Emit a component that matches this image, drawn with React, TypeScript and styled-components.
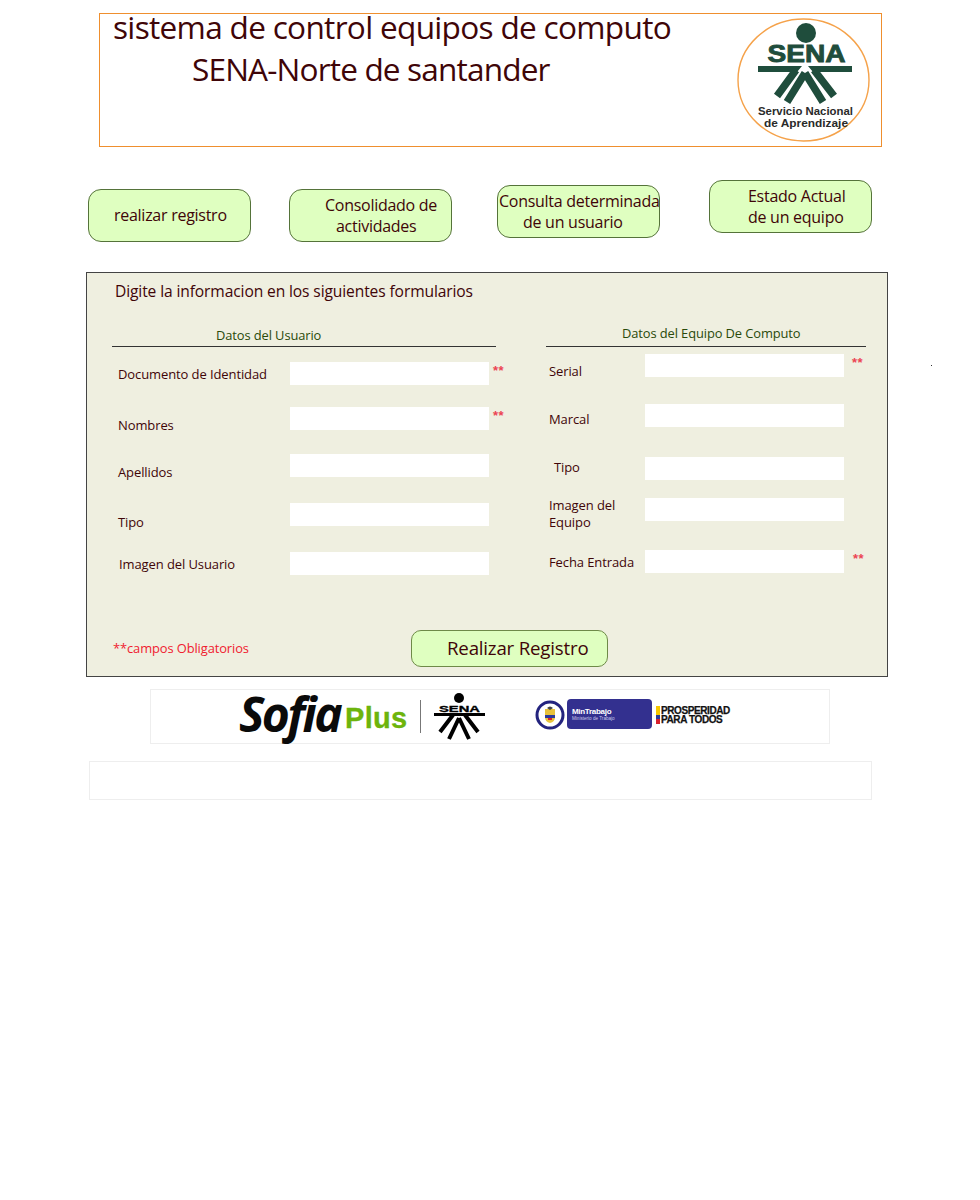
import React from "react";
import styled, { createGlobalStyle } from "styled-components";

const Global = createGlobalStyle`
  * { box-sizing: border-box; }
  body { margin: 0; background: #fff; font-family: "Open Sans", "Noto Sans", sans-serif; color: #3f0508; }
`;
const Page = styled.div`
  position: relative;
  width: 980px;
  height: 1200px;
  padding-top: 13px;
`;
const Header = styled.header`
  display: flex;
  justify-content: space-between;
  width: 783px;
  height: 134px;
  margin-left: 99px;
  border: 1px solid #ef8f2e;
`;
const Titles = styled.div`
  display: flex;
  flex-direction: column;
  gap: 14px;
  margin-top: -1px;
`;
const Title = styled.h1<{ $indent: number; $spacing: number }>`
  margin: 0 0 0 ${(p) => p.$indent}px;
  font-size: 31.6px;
  font-weight: 400;
  line-height: 28px;
  letter-spacing: ${(p) => p.$spacing}px;
  white-space: nowrap;
  color: #3f0508;
`;
const LogoSvg = styled.svg`
  flex: none;
  width: 140px;
  height: 130px;
  margin: 1px 7px 0 0;
`;
const Nav = styled.nav`
  display: flex;
  height: 62px;
  margin: 33px 0 0 88px;
`;
const NavButton = styled.a<{ $left: number; $top: number }>`
  display: flex;
  flex-direction: column;
  justify-content: center;
  width: 163px;
  height: 53px;
  margin: ${(p) => p.$top}px 0 0 ${(p) => p.$left}px;
  background: #dfffc0;
  border: 1px solid #55733a;
  border-radius: 13px;
  font-size: 16px;
  line-height: 21px;
  letter-spacing: -0.27px;
`;
const NavLine = styled.span<{ $indent: number }>`
  display: block;
  margin-left: ${(p) => p.$indent}px;
  white-space: nowrap;
`;
const Panel = styled.form`
  display: flex;
  flex-direction: column;
  width: 802px;
  height: 405px;
  margin: 30px 0 0 86px;
  padding: 8px 0 9px;
  background: #efefe0;
  border: 1px solid #444;
`;
const PanelTitle = styled.h2`
  margin: 0 0 0 28px;
  font-size: 15.6px;
  font-weight: 400;
  line-height: 20px;
  letter-spacing: -0.12px;
`;
const Columns = styled.div`
  display: flex;
  margin: 22px 0 0 25px;
`;
const Column = styled.section<{ $width: number; $gap: number }>`
  width: ${(p) => p.$width}px;
  margin-right: ${(p) => p.$gap}px;
`;
const ColumnHeading = styled.h3<{ $indent: number; $top: number }>`
  height: 24px;
  margin: 0;
  padding: ${(p) => p.$top}px 0 0 ${(p) => p.$indent}px;
  border-bottom: 1px solid #333;
  font-size: 12.9px;
  font-weight: 400;
  line-height: 20px;
  letter-spacing: -0.1px;
  color: #2a4a0a;
`;
const Field = styled.div<{ $top: number }>`
  display: flex;
  height: 23px;
  margin-top: ${(p) => p.$top}px;
`;
const FieldLabel = styled.label<{ $width: number; $indent: number; $offset: number }>`
  flex: none;
  width: ${(p) => p.$width}px;
  height: 18px;
  margin-top: ${(p) => p.$offset}px;
  padding-left: ${(p) => p.$indent}px;
  font-size: 13px;
  line-height: 17px;
  letter-spacing: -0.1px;
`;
const Input = styled.input`
  flex: none;
  width: 199px;
  height: 23px;
  padding: 0;
  background: #fff;
  border: 0;
`;
const Required = styled.span<{ $gap: number }>`
  margin: 1px 0 0 ${(p) => p.$gap}px;
  font-family: "Liberation Sans", sans-serif;
  font-size: 13px;
  font-weight: 700;
  line-height: 16px;
  letter-spacing: 0.5px;
  color: #ec4453;
`;
const PanelFooter = styled.div`
  display: flex;
  align-items: center;
  margin-top: auto;
`;
const FooterNote = styled.span`
  width: 324px;
  padding: 0 0 2px 26px;
  font-size: 12.9px;
  letter-spacing: -0.1px;
  color: #f0202f;
`;
const SubmitButton = styled.button`
  width: 197px;
  height: 37px;
  padding: 0 0 2px 35px;
  text-align: left;
  background: #dfffc0;
  border: 1px solid #6e8a48;
  border-radius: 10px;
  font-family: inherit;
  font-size: 18.7px;
  letter-spacing: -0.2px;
  color: #3f0508;
`;
const Banner = styled.div`
  display: flex;
  align-items: center;
  width: 680px;
  height: 55px;
  margin: 12px 0 0 150px;
  padding-left: 88px;
  border: 1px solid #eee;
`;
const Sofia = styled.span`
  width: 106px;
  margin-bottom: 6px;
  font-family: "Open Sans", sans-serif;
  font-size: 48px;
  font-weight: 700;
  font-style: italic;
  line-height: 50px;
  letter-spacing: -2.6px;
  color: #0a0a0a;
`;
const Plus = styled.span`
  width: 64px;
  margin-top: 3px;
  font-family: "Liberation Sans", sans-serif;
  font-size: 29px;
  font-weight: 700;
  line-height: 34px;
  letter-spacing: 0.3px;
  color: #6db40c;
  -webkit-text-stroke: 0.3px #6db40c;
`;
const Divider = styled.span`
  width: 1px;
  height: 33px;
  margin-left: 11px;
  background: #777;
`;
const SenaSmall = styled.svg`
  flex: none;
  width: 52px;
  height: 48px;
  margin-left: 13px;
`;
const Seal = styled.svg`
  flex: none;
  width: 30px;
  height: 30px;
  margin: 0 0 4px 49px;
`;
const Ministry = styled.div`
  display: flex;
  flex-direction: column;
  justify-content: center;
  width: 85px;
  height: 30px;
  margin: 0 0 5px 2px;
  padding-left: 5px;
  background: #33308f;
  border-radius: 4px;
  font-family: "Liberation Sans", sans-serif;
  color: #fff;
`;
const MinistryName = styled.span`
  font-size: 8px;
  font-weight: 700;
  line-height: 9px;
  letter-spacing: -0.3px;
`;
const MinistrySub = styled.span`
  font-size: 4.6px;
  line-height: 6px;
  color: #c9c8ea;
`;
const Flag = styled.span`
  flex: none;
  width: 4px;
  height: 18px;
  margin: 0 0 3px 4px;
  background: linear-gradient(#f7c600 0 50%, #2a3a9c 50% 75%, #d8202c 75%);
`;
const Prosperity = styled.span`
  margin: 0 0 3px 1px;
  font-family: "Liberation Sans", sans-serif;
  font-size: 10px;
  font-weight: 700;
  line-height: 9.5px;
  letter-spacing: -0.4px;
  white-space: nowrap;
  color: #111;
  -webkit-text-stroke: 0.25px #111;
`;
const EmptyBox = styled.div`
  width: 783px;
  height: 39px;
  margin: 17px 0 0 89px;
  border: 1px solid #eee;
`;
const Speck = styled.span`
  position: absolute;
  left: 931px;
  top: 365px;
  width: 1px;
  height: 1px;
  background: #333;
`;

const SenaLogo = () => (
  <LogoSvg viewBox="734 15 140 130">
    <ellipse cx="803.5" cy="80" rx="65.5" ry="61" fill="#fff" stroke="#f5a24a" strokeWidth="1.4" />
    <circle cx="806" cy="33" r="10" fill="#1f4d3c" />
    <text x="806.5" y="62" textAnchor="middle" fontFamily="Liberation Sans" fontWeight="700" fontSize="24.5" textLength="78" lengthAdjust="spacingAndGlyphs" fill="#1f4d3c" stroke="#1f4d3c" strokeWidth="0.9">SENA</text>
    <path d="M758 66h44l-5 6h-39zM852 66h-44l5 6h39z" fill="#1f4d3c" />
    <path d="M796 70 777 96M805 73 787 102M805 73 823 102M814 70 834 96" fill="none" stroke="#1f4d3c" strokeWidth="7.5" />
    <text x="805.5" y="114.5" textAnchor="middle" fontFamily="Liberation Sans" fontWeight="700" fontSize="10.5" textLength="95" lengthAdjust="spacingAndGlyphs" fill="#2a2a2a">Servicio Nacional</text>
    <text x="806" y="126.5" textAnchor="middle" fontFamily="Liberation Sans" fontWeight="700" fontSize="10.5" textLength="84" lengthAdjust="spacingAndGlyphs" fill="#2a2a2a">de Aprendizaje</text>
  </LogoSvg>
);

const App = () => (
  <Page>
    <Global />
    <Header>
      <Titles>
        <Title $indent={13} $spacing={-0.7}>sistema de control equipos de computo</Title>
        <Title $indent={92} $spacing={-0.85}>SENA-Norte de santander</Title>
      </Titles>
      <SenaLogo />
    </Header>
    <Nav>
      <NavButton $left={0} $top={9}>
        <NavLine $indent={25}>realizar registro</NavLine>
      </NavButton>
      <NavButton $left={38} $top={9}>
        <NavLine $indent={35}>Consolidado de</NavLine>
        <NavLine $indent={46}>actividades</NavLine>
      </NavButton>
      <NavButton $left={45} $top={5}>
        <NavLine $indent={1}>Consulta determinada</NavLine>
        <NavLine $indent={25}>de un usuario</NavLine>
      </NavButton>
      <NavButton $left={49} $top={0}>
        <NavLine $indent={38}>Estado Actual</NavLine>
        <NavLine $indent={38}>de un equipo</NavLine>
      </NavButton>
    </Nav>
    <Panel>
      <PanelTitle>Digite la informacion en los siguientes formularios</PanelTitle>
      <Columns>
        <Column $width={384} $gap={50}>
          <ColumnHeading $indent={104} $top={2}>Datos del Usuario</ColumnHeading>
          <Field $top={15}>
            <FieldLabel $width={178} $indent={6} $offset={4}>Documento de Identidad</FieldLabel>
            <Input /><Required $gap={4}>**</Required>
          </Field>
          <Field $top={22}>
            <FieldLabel $width={178} $indent={6} $offset={10}>Nombres</FieldLabel>
            <Input /><Required $gap={4}>**</Required>
          </Field>
          <Field $top={24}>
            <FieldLabel $width={178} $indent={6} $offset={10}>Apellidos</FieldLabel>
            <Input />
          </Field>
          <Field $top={26}>
            <FieldLabel $width={178} $indent={6} $offset={11}>Tipo</FieldLabel>
            <Input />
          </Field>
          <Field $top={26}>
            <FieldLabel $width={178} $indent={7} $offset={4}>Imagen del Usuario</FieldLabel>
            <Input />
          </Field>
        </Column>
        <Column $width={320} $gap={0}>
          <ColumnHeading $indent={76} $top={0}>Datos del Equipo De Computo</ColumnHeading>
          <Field $top={7}>
            <FieldLabel $width={99} $indent={3} $offset={9}>Serial</FieldLabel>
            <Input /><Required $gap={8}>**</Required>
          </Field>
          <Field $top={27}>
            <FieldLabel $width={99} $indent={3} $offset={7}>Marcal</FieldLabel>
            <Input />
          </Field>
          <Field $top={30}>
            <FieldLabel $width={99} $indent={8} $offset={2}>Tipo</FieldLabel>
            <Input />
          </Field>
          <Field $top={18}>
            <FieldLabel $width={99} $indent={3} $offset={-1}>Imagen del Equipo</FieldLabel>
            <Input />
          </Field>
          <Field $top={29}>
            <FieldLabel $width={99} $indent={3} $offset={4}>Fecha Entrada</FieldLabel>
            <Input /><Required $gap={9}>**</Required>
          </Field>
        </Column>
      </Columns>
      <PanelFooter>
        <FooterNote>**campos Obligatorios</FooterNote>
        <SubmitButton type="button">Realizar Registro</SubmitButton>
      </PanelFooter>
    </Panel>
    <Banner>
      <Sofia>Sofia</Sofia>
      <Plus>Plus</Plus>
      <Divider />
      <SenaSmall viewBox="434 692 52 48">
        <circle cx="459" cy="697" r="5" fill="#000" />
        <text x="459.5" y="711" textAnchor="middle" fontFamily="Liberation Sans" fontWeight="700" fontSize="8.5" textLength="41" lengthAdjust="spacingAndGlyphs" fill="#000" stroke="#000" strokeWidth="0.3">SENA</text>
        <path d="M434 712h51v3h-51z" fill="#000" />
        <path d="M453 714 440 731M459 717 449 738M459 717 469 738M465 714 478 731" fill="none" stroke="#000" strokeWidth="4" />
      </SenaSmall>
      <Seal viewBox="0 0 30 30">
        <circle cx="15" cy="15" r="13" fill="#fff" stroke="#23237e" strokeWidth="3" />
        <path d="M10 9h10v8q0 5-5 6q-5-1-5-6z" fill="#e8c23a" />
        <path d="M10 15h10v3h-10z" fill="#2a3a9c" />
        <path d="M13 18h4v2h-4z" fill="#d8202c" />
        <path d="M12 8q3-3 6 0l-3 2z" fill="#444" />
      </Seal>
      <Ministry>
        <MinistryName>MinTrabajo</MinistryName>
        <MinistrySub>Ministerio de Trabajo</MinistrySub>
      </Ministry>
      <Flag />
      <Prosperity>PROSPERIDAD<br />PARA TODOS</Prosperity>
    </Banner>
    <EmptyBox />
    <Speck />
  </Page>
);

export default App;
